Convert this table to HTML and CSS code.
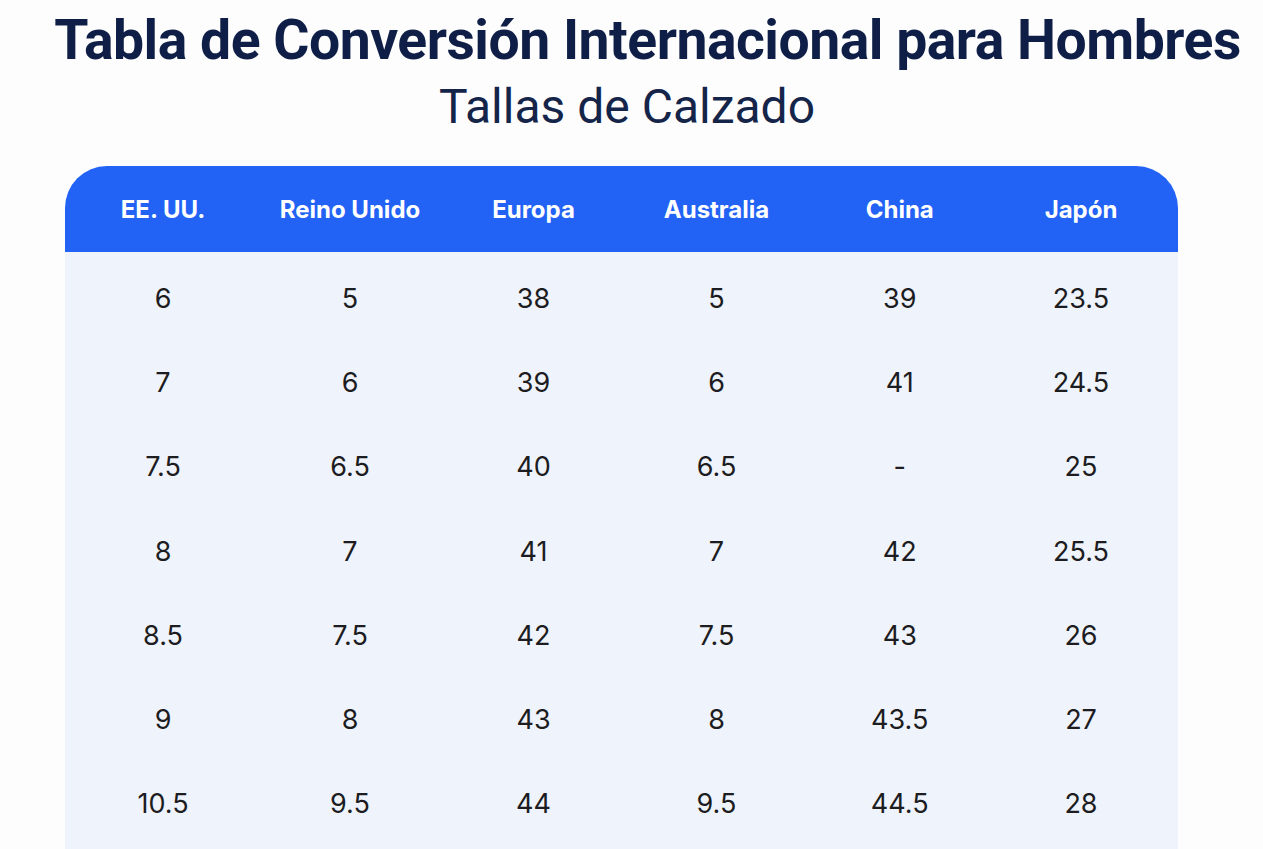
FILE: index.html
```html
<!DOCTYPE html>
<html lang="es">
<head>
<meta charset="utf-8">
<title>Tabla de Conversión</title>
<link rel="stylesheet" href="styles.css">
</head>
<body>
<main class="page">
  <header class="heading">
    <h1 class="title">Tabla de Conversión Internacional para Hombres</h1>
    <h2 class="subtitle">Tallas de Calzado</h2>
  </header>
  <section class="table">
    <div class="row head">
      <div>EE. UU.</div><div>Reino Unido</div><div>Europa</div><div>Australia</div><div>China</div><div>Japón</div>
    </div>
    <div class="body">
      <div class="row"><div>6</div><div>5</div><div>38</div><div>5</div><div>39</div><div>23.5</div></div>
      <div class="row"><div>7</div><div>6</div><div>39</div><div>6</div><div>41</div><div>24.5</div></div>
      <div class="row"><div>7.5</div><div>6.5</div><div>40</div><div>6.5</div><div>-</div><div>25</div></div>
      <div class="row"><div>8</div><div>7</div><div>41</div><div>7</div><div>42</div><div>25.5</div></div>
      <div class="row"><div>8.5</div><div>7.5</div><div>42</div><div>7.5</div><div>43</div><div>26</div></div>
      <div class="row"><div>9</div><div>8</div><div>43</div><div>8</div><div>43.5</div><div>27</div></div>
      <div class="row"><div>10.5</div><div>9.5</div><div>44</div><div>9.5</div><div>44.5</div><div>28</div></div>
    </div>
  </section>
</main>
</body>
</html>
```
FILE: styles.css
```css
html, body {
  margin: 0;
  padding: 0;
  background: #fdfdfe;
}
body {
  font-family: Inter, Roboto, sans-serif;
  overflow: hidden;
  height: 849px;
}
.page {
  display: flex;
  flex-direction: column;
  align-items: flex-start;
}
.heading {
  align-self: stretch;
  display: flex;
  flex-direction: column;
  align-items: center;
  padding-top: 9px;
}
.title {
  margin: 0;
  padding-left: 32px;
  font-family: Roboto, sans-serif;
  font-weight: 700;
  font-size: 55.3px;
  line-height: 64px;
  letter-spacing: -0.5px;
  color: #0f1e46;
}
.subtitle {
  margin: 6px 0 0;
  padding-right: 9px;
  font-family: Roboto, sans-serif;
  font-weight: 400;
  font-size: 48px;
  line-height: 56px;
  color: #152549;
}
.table {
  margin: 31px 0 0 65px;
  width: 1113px;
}
.row {
  display: grid;
  grid-template-columns: 189fr 185fr 182fr 184fr 182.5fr 180fr;
  padding: 0 7px 0 3.5px;
  text-align: center;
}
.head {
  background: #2263f6;
  color: #fff;
  font-weight: 700;
  font-size: 24px;
  height: 86px;
  align-items: center;
  border-radius: 42px 42px 0 0;
}
.body {
  background: #eff3fc;
  padding-top: 4px;
  padding-bottom: 20px;
}
.body .row {
  height: 84.3px;
  align-items: center;
  font-size: 27px;
  color: #1c1c21;
}
```
